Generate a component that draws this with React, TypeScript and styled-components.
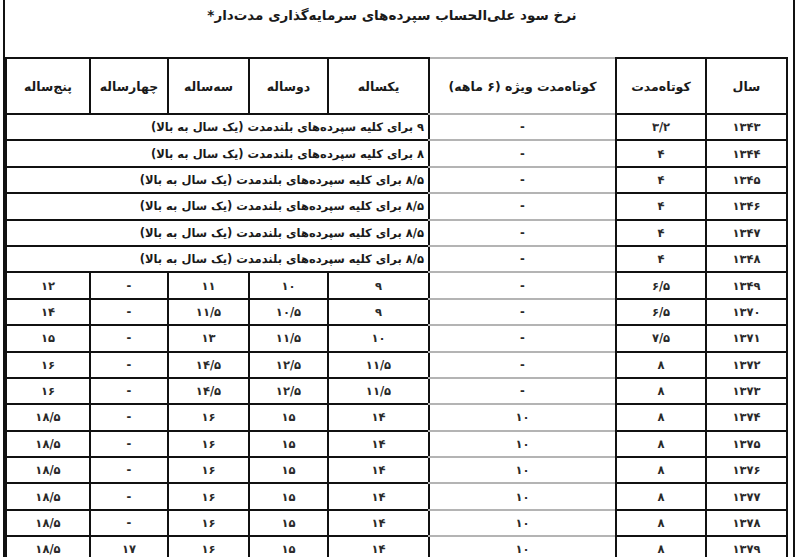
import styled, { createGlobalStyle } from "styled-components";

type Row = { year: string; short: string; special: string; long: string[] | string };

const GlobalStyle = createGlobalStyle`
  html, body {
    margin: 0;
    padding: 0;
    background: #fff;
    overflow: hidden;
  }
`;

const Frame = styled.div`
  margin-left: 3px;
  width: 792px;
  height: 557px;
  box-sizing: border-box;
  border-left: 2px solid #111;
  border-right: 2px solid #111;
  font-family: "DejaVu Sans", sans-serif;
  color: #1a1a1a;
`;

const TitleBar = styled.div`
  height: 57px;
  display: flex;
  justify-content: center;
  align-items: flex-start;
  padding: 7px 14px 0 0;
  box-sizing: border-box;
  font-size: 13.5px;
  font-weight: bold;
`;

const Table = styled.table`
  width: 781px;
  table-layout: fixed;
  border-collapse: collapse;
  border: 2px solid #111;
  font-size: 11.5px;
`;

const HeadCell = styled.th<{ $special?: boolean }>`
  height: 54px;
  padding: 0;
  border: 2px solid #111;
  border-top-color: ${(p) => (p.$special ? "#b4b4b4" : "#111")};
  border-bottom-color: ${(p) => (p.$special ? "#b4b4b4" : "#111")};
  font-size: 12.5px;
  font-weight: bold;
  text-align: center;
`;

const Tr = styled.tr`
  height: 26.4px;
`;

const Td = styled.td<{ $special?: boolean }>`
  padding: 0;
  border: 2px solid #111;
  border-top-color: ${(p) => (p.$special ? "#b4b4b4" : "#111")};
  border-bottom-color: ${(p) => (p.$special ? "#b4b4b4" : "#111")};
  text-align: center;
  font-weight: bold;
  color: #2a2a2a;
`;

const NoteCell = styled.td`
  padding: 0 4px 0 0;
  border: 2px solid #111;
  text-align: right;
  font-weight: bold;
  color: #1a1a1a;
  white-space: nowrap;
`;

const widths = [81, 90, 187, 101, 79, 81, 78, 84];
const heads = ["سال", "کوتاه‌مدت", "کوتاه‌مدت ویژه (۶ ماهه)", "یکساله", "دوساله", "سه‌ساله", "چهارساله", "پنج‌ساله"];
const note = "برای کلیه سپرده‌های بلندمدت (یک سال به بالا)";

const long1 = ["۱۴", "۱۵", "۱۶", "-", "۱۸/۵"];

const rows: Row[] = [
  { year: "۱۳۴۳", short: "۳/۲", special: "-", long: `۹ ${note}` },
  { year: "۱۳۴۴", short: "۴", special: "-", long: `۸ ${note}` },
  { year: "۱۳۴۵", short: "۴", special: "-", long: `۸/۵ ${note}` },
  { year: "۱۳۴۶", short: "۴", special: "-", long: `۸/۵ ${note}` },
  { year: "۱۳۴۷", short: "۴", special: "-", long: `۸/۵ ${note}` },
  { year: "۱۳۴۸", short: "۴", special: "-", long: `۸/۵ ${note}` },
  { year: "۱۳۴۹", short: "۶/۵", special: "-", long: ["۹", "۱۰", "۱۱", "-", "۱۲"] },
  { year: "۱۳۷۰", short: "۶/۵", special: "-", long: ["۹", "۱۰/۵", "۱۱/۵", "-", "۱۴"] },
  { year: "۱۳۷۱", short: "۷/۵", special: "-", long: ["۱۰", "۱۱/۵", "۱۳", "-", "۱۵"] },
  { year: "۱۳۷۲", short: "۸", special: "-", long: ["۱۱/۵", "۱۲/۵", "۱۴/۵", "-", "۱۶"] },
  { year: "۱۳۷۳", short: "۸", special: "-", long: ["۱۱/۵", "۱۲/۵", "۱۴/۵", "-", "۱۶"] },
  { year: "۱۳۷۴", short: "۸", special: "۱۰", long: long1 },
  { year: "۱۳۷۵", short: "۸", special: "۱۰", long: long1 },
  { year: "۱۳۷۶", short: "۸", special: "۱۰", long: long1 },
  { year: "۱۳۷۷", short: "۸", special: "۱۰", long: long1 },
  { year: "۱۳۷۸", short: "۸", special: "۱۰", long: long1 },
  { year: "۱۳۷۹", short: "۸", special: "۱۰", long: ["۱۴", "۱۵", "۱۶", "۱۷", "۱۸/۵"] },
];

export default function App() {
  return (
    <>
      <GlobalStyle />
      <Frame>
        <TitleBar dir="rtl">نرخ سود علی‌الحساب سپرده‌های سرمایه‌گذاری مدت‌دار*</TitleBar>
        <Table dir="rtl">
          <colgroup>
            {widths.map((w, i) => (
              <col key={i} style={{ width: w }} />
            ))}
          </colgroup>
          <thead>
            <tr>
              {heads.map((h, i) => (
                <HeadCell key={h} $special={i === 2}>
                  {h}
                </HeadCell>
              ))}
            </tr>
          </thead>
          <tbody>
            {rows.map((r) => (
              <Tr key={r.year}>
                <Td>{r.year}</Td>
                <Td>{r.short}</Td>
                <Td $special>{r.special}</Td>
                {typeof r.long === "string" ? (
                  <NoteCell colSpan={5}>{r.long}</NoteCell>
                ) : (
                  r.long.map((v, i) => <Td key={i}>{v}</Td>)
                )}
              </Tr>
            ))}
          </tbody>
        </Table>
      </Frame>
    </>
  );
}
